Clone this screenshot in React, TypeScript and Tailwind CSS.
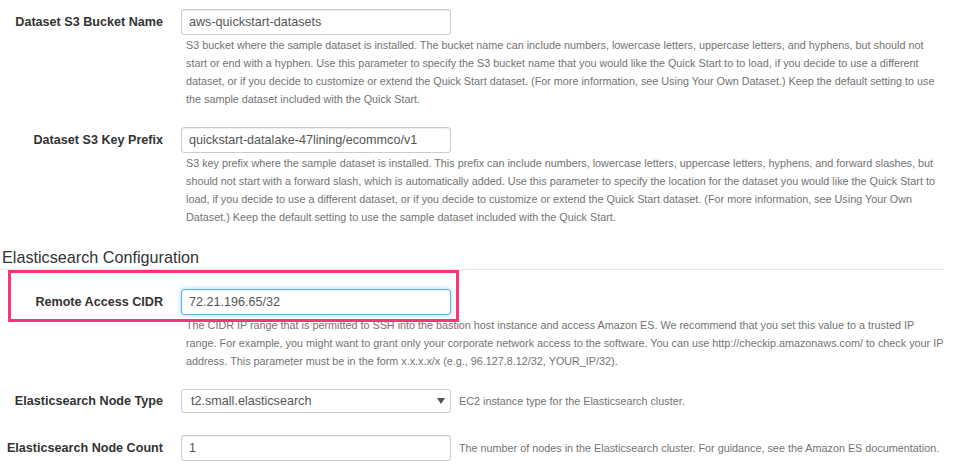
import React from 'react';

// Bootstrap-ish horizontal form, scaled down to 90%
const FONT = "font-['Liberation_Sans',Arial,sans-serif]";

interface FieldProps {
  label: string;
  children: React.ReactNode;
}

const Label: React.FC<{ text: string }> = ({ text }) => (
  <div className="w-[163px] shrink-0 text-right text-[12.6px] font-bold text-[#333] leading-[26px]">{text}</div>
);

const TextBox: React.FC<{ value: string; focused?: boolean }> = ({ value, focused }) => (
  <input
    readOnly
    value={value}
    className={`w-[270px] h-[26px] rounded-[3px] border bg-white px-[7px] text-[12.6px] text-[#555] outline-none ${
      focused
        ? 'border-[#66afe9] shadow-[inset_0_1px_1px_rgba(0,0,0,0.075),0_0_5px_rgba(102,175,233,0.6)]'
        : 'border-[#ccc] shadow-[inset_0_1px_1px_rgba(0,0,0,0.075)]'
    }`}
  />
);

const Help: React.FC<{ children: React.ReactNode }> = ({ children }) => (
  <p className="ml-[5px] mt-[1px] w-[758px] text-[10.8px] leading-[18px] text-[#737373]">{children}</p>
);

const Field: React.FC<FieldProps> = ({ label, children }) => (
  <div className="flex items-start">
    <Label text={label} />
    <div className="ml-[18px]">{children}</div>
  </div>
);

export default function App() {
  return (
    <div className={`${FONT} w-[953px] h-[464px] overflow-hidden bg-white`}>
      <div className="w-[944px] pt-[9px]">
        <Field label="Dataset S3 Bucket Name">
          <TextBox value="aws-quickstart-datasets" />
          <Help>
            S3 bucket where the sample dataset is installed. The bucket name can include numbers, lowercase letters,
            uppercase letters, and hyphens, but should not start or end with a hyphen. Use this parameter to specify the S3
            bucket name that you would like the Quick Start to to load, if you decide to use a different dataset, or if you
            decide to customize or extend the Quick Start dataset. (For more information, see Using Your Own Dataset.) Keep
            the default setting to use the sample dataset included with the Quick Start.
          </Help>
        </Field>

        <div className="mt-[19px]">
          <Field label="Dataset S3 Key Prefix">
            <TextBox value="quickstart-datalake-47lining/ecommco/v1" />
            <Help>
              S3 key prefix where the sample dataset is installed. This prefix can include numbers, lowercase letters,
              uppercase letters, hyphens, and forward slashes, but should not start with a forward slash, which is
              automatically added. Use this parameter to specify the location for the dataset you would like the Quick
              Start to load, if you decide to use a different dataset, or if you decide to customize or extend the Quick
              Start dataset. (For more information, see Using Your Own Dataset.) Keep the default setting to use the sample
              dataset included with the Quick Start.
            </Help>
          </Field>
        </div>

        <h3 className="mt-[21px] pl-[2px] pb-[2px] border-b border-[#e5e5e5] text-[16.2px] leading-[20px] text-[#333]">
          Elasticsearch Configuration
        </h3>

        <div className="relative pt-[19px]">
          <Field label="Remote Access CIDR">
            <TextBox value="72.21.196.65/32" focused />
            <Help>
              The CIDR IP range that is permitted to SSH into the bastion host instance and access Amazon ES. We recommend
              that you set this value to a trusted IP range. For example, you might want to grant only your corporate
              network access to the software. You can use http://checkip.amazonaws.com/ to check your IP address. This
              parameter must be in the form x.x.x.x/x (e.g., 96.127.8.12/32, YOUR_IP/32).
            </Help>
          </Field>
          {/* annotation highlight */}
          <div className="absolute left-[8px] top-0 w-[451px] h-[52px] border-[3px] border-[#fb3573] pointer-events-none" />
        </div>

        <div className="mt-[19px] flex items-start">
          <div className="w-[163px] shrink-0 text-right text-[12.6px] font-bold text-[#333] leading-[24px]">
            Elasticsearch Node Type
          </div>
          <div className="ml-[18px] w-[270px] h-[24px] rounded-[3px] border border-[#ccc] bg-white flex items-center justify-between pl-[9px] pr-[5px] text-[12.6px] text-[#555]">
            <span>t2.small.elasticsearch</span>
            <svg width="8" height="6" viewBox="0 0 8 6">
              <path d="M0 0h8L4 6z" fill="#555" />
            </svg>
          </div>
          <div className="ml-[8px] text-[10.8px] leading-[24px] text-[#737373]">
            EC2 instance type for the Elasticsearch cluster.
          </div>
        </div>

        <div className="mt-[22px] flex items-start">
          <Label text="Elasticsearch Node Count" />
          <div className="ml-[18px]">
            <TextBox value="1" />
          </div>
          <div className="ml-[8px] text-[10.8px] leading-[26px] text-[#737373]">
            The number of nodes in the Elasticsearch cluster. For guidance, see the Amazon ES documentation.
          </div>
        </div>
      </div>
    </div>
  );
}
